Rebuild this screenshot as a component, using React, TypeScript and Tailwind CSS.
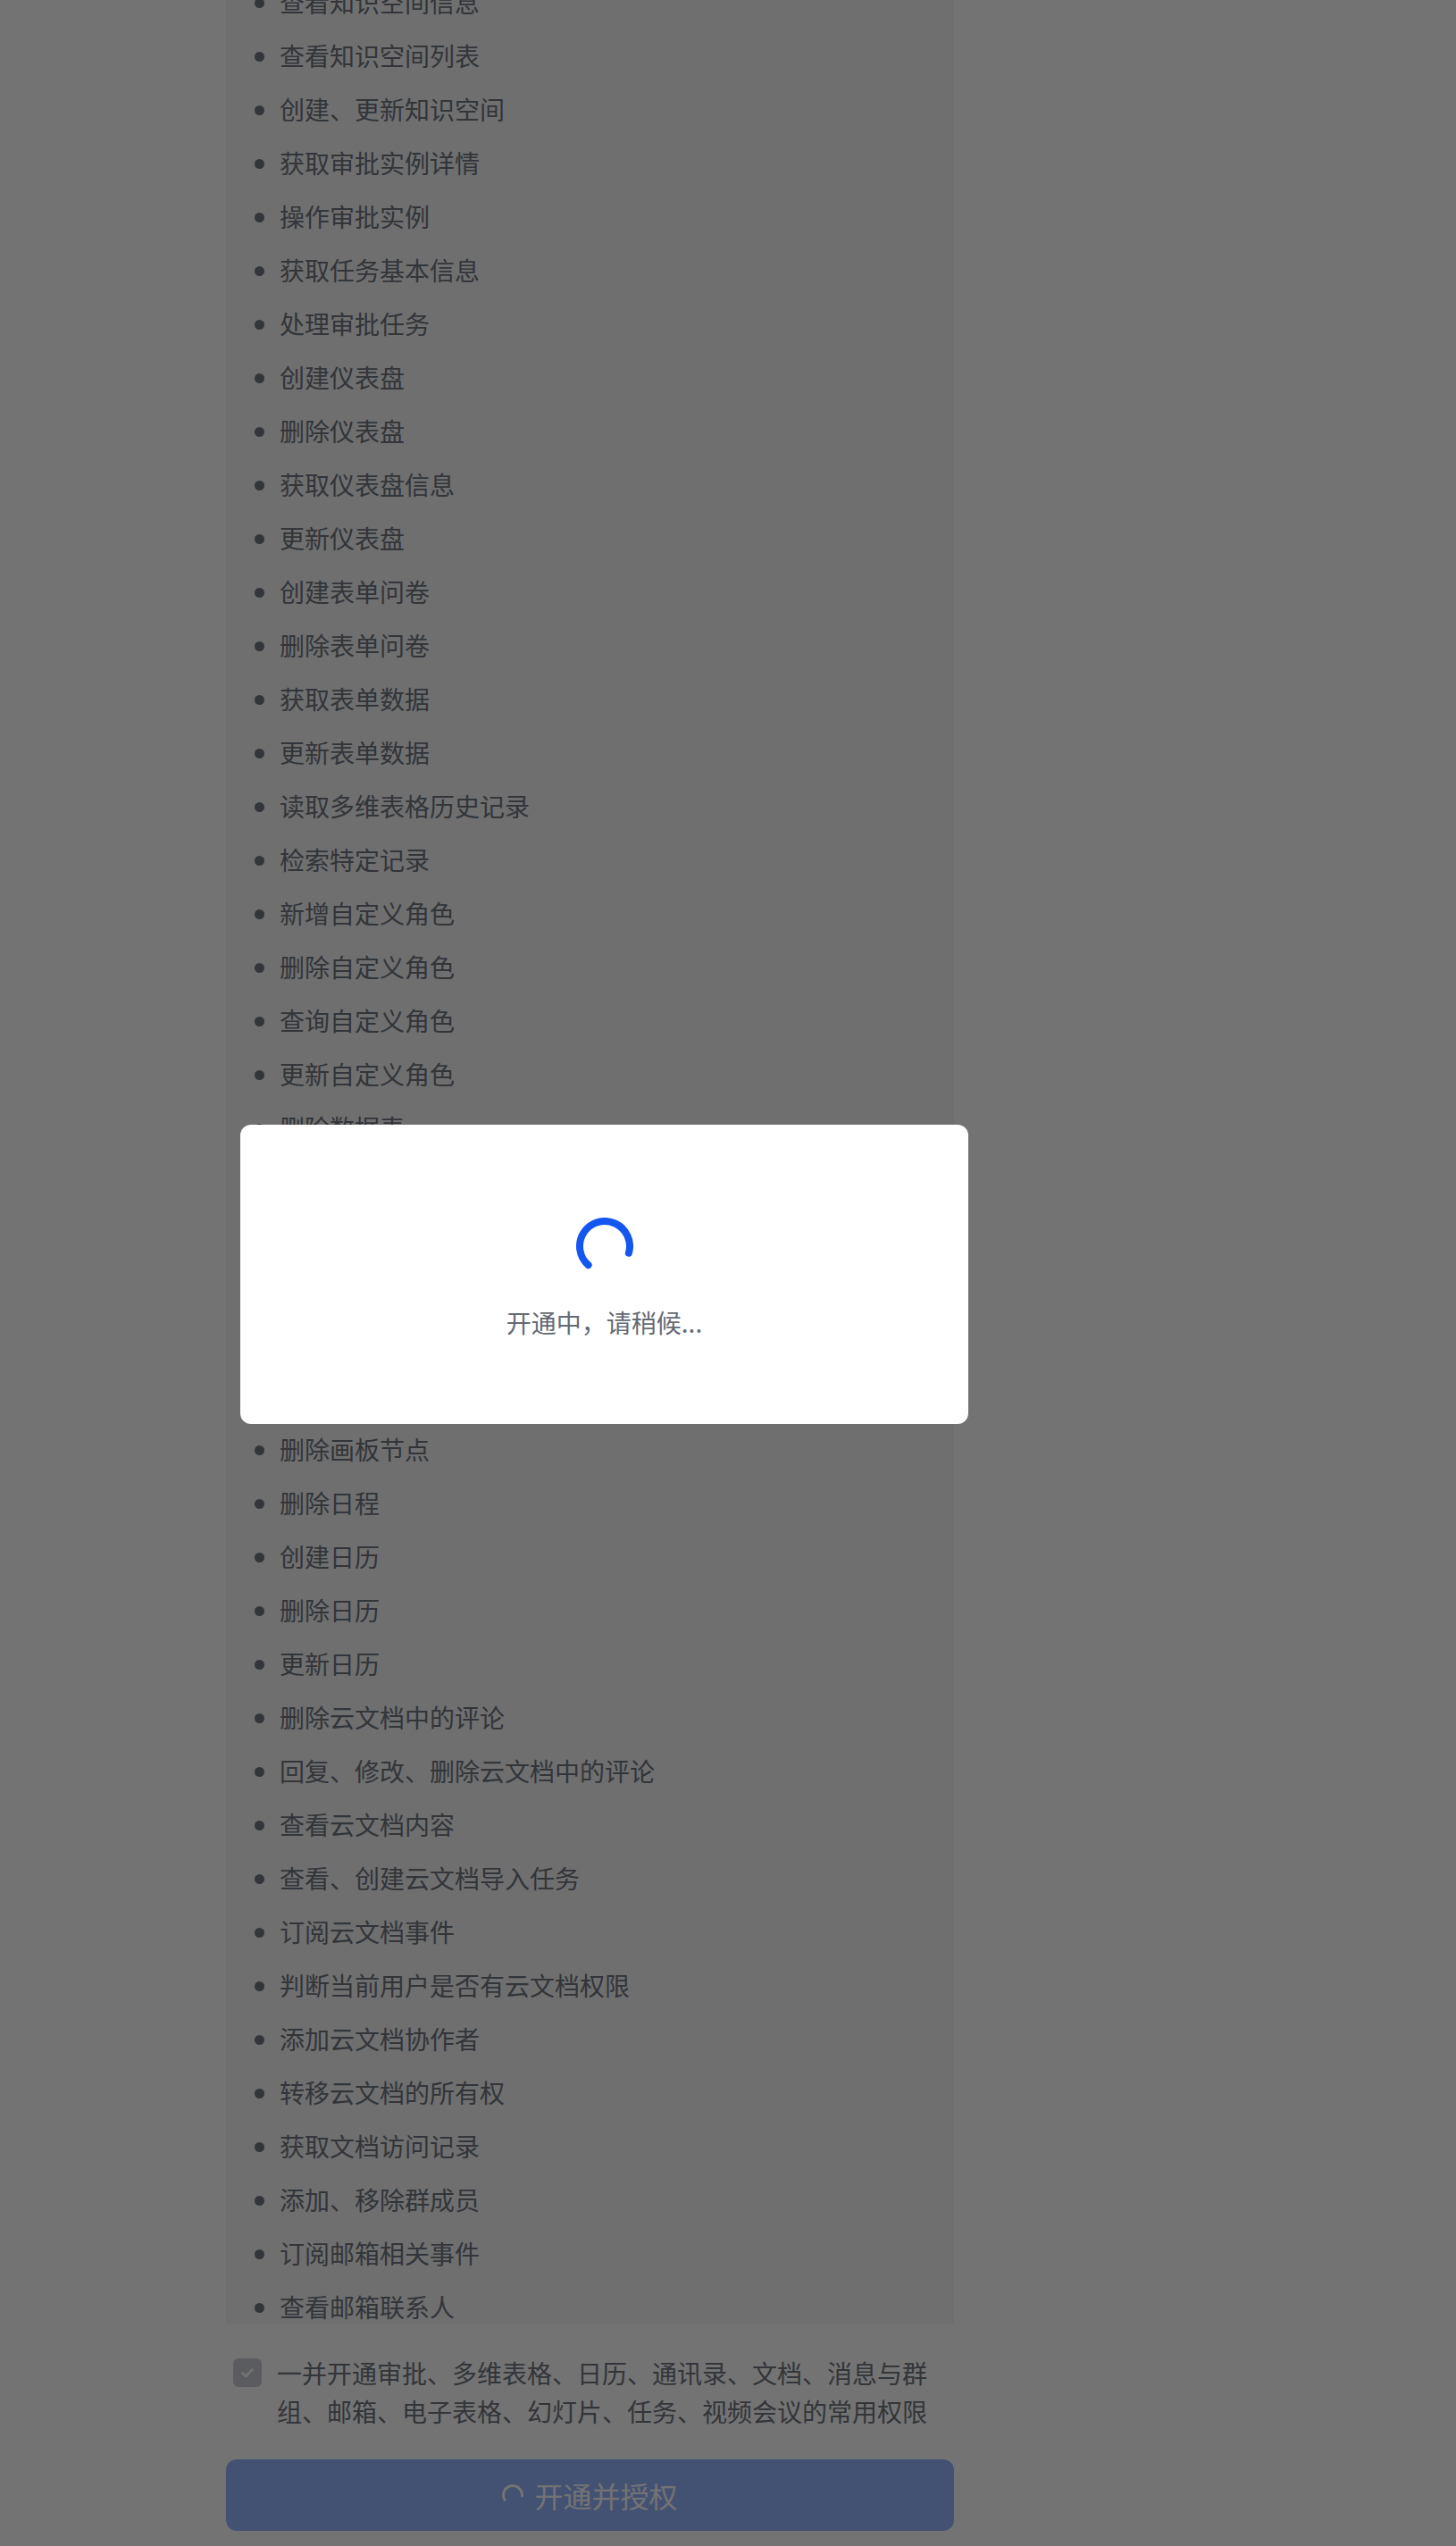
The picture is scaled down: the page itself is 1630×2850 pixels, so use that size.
const permissions = [
  "查看知识空间信息",
  "查看知识空间列表",
  "创建、更新知识空间",
  "获取审批实例详情",
  "操作审批实例",
  "获取任务基本信息",
  "处理审批任务",
  "创建仪表盘",
  "删除仪表盘",
  "获取仪表盘信息",
  "更新仪表盘",
  "创建表单问卷",
  "删除表单问卷",
  "获取表单数据",
  "更新表单数据",
  "读取多维表格历史记录",
  "检索特定记录",
  "新增自定义角色",
  "删除自定义角色",
  "查询自定义角色",
  "更新自定义角色",
  "删除数据表",
  "新增数据表",
  "更新数据表",
  "查询数据表",
  "创建画板节点",
  "查看画板节点",
  "删除画板节点",
  "删除日程",
  "创建日历",
  "删除日历",
  "更新日历",
  "删除云文档中的评论",
  "回复、修改、删除云文档中的评论",
  "查看云文档内容",
  "查看、创建云文档导入任务",
  "订阅云文档事件",
  "判断当前用户是否有云文档权限",
  "添加云文档协作者",
  "转移云文档的所有权",
  "获取文档访问记录",
  "添加、移除群成员",
  "订阅邮箱相关事件",
  "查看邮箱联系人",
];

function Spinner() {
  return (
    <svg width="64" height="64" viewBox="0 0 64 64" fill="none">
      <path
        d="M13.63 53.13 A28 28 0 1 1 58.92 39.72"
        stroke="#1456f0"
        strokeWidth="8"
        strokeLinecap="round"
      />
    </svg>
  );
}

function SmallSpinner() {
  return (
    <svg width="24" height="24" viewBox="0 0 24 24" fill="none">
      <path
        d="M2.91 17.25 A10.5 10.5 0 1 1 22.46 12.92"
        stroke="#ffffff"
        strokeWidth="3"
        strokeLinecap="round"
      />
    </svg>
  );
}

export default function App() {
  return (
    <div className="relative h-[2850px] w-full overflow-hidden bg-white font-['Noto_Sans_CJK_SC',sans-serif]">
      <div className="ml-[253px] flex w-[815px] flex-col">
        {/* permission list, scrolled */}
        <div className="h-[2602px] overflow-hidden bg-[#f5f6f7]">
          <ul className="-mt-[18px] flex flex-col gap-[20px]">
            {permissions.map((p) => (
              <li key={p} className="flex h-[40px] items-center gap-[17px] pl-[32px]">
                <span className="mt-[3px] h-[11px] w-[11px] shrink-0 rounded-full bg-[#6f757f]" />
                <span className="text-[28px] leading-[40px] text-[#6f757f]">{p}</span>
              </li>
            ))}
          </ul>
        </div>

        <div className="mt-[33px] flex items-start gap-[17px] pl-[8px]">
          <span className="mt-[5px] flex h-[32px] w-[32px] shrink-0 items-center justify-center rounded-[6px] bg-[#c9cdd2]">
            <svg width="20" height="20" viewBox="0 0 20 20" fill="none">
              <path d="M4.5 10.5 L8.3 14 L15.5 6.5" stroke="#ffffff" strokeWidth="2.6" strokeLinecap="round" strokeLinejoin="round" />
            </svg>
          </span>
          <p className="w-[740px] text-[28px] leading-[43px] text-[#6f757f]">
            一并开通审批、多维表格、日历、通讯录、文档、消息与群组、邮箱、电子表格、幻灯片、任务、视频会议的常用权限
          </p>
        </div>

        <button className="mt-[32px] flex h-[80px] w-full items-center justify-center gap-[12px] rounded-[12px] bg-[#94b5ff] text-[32px] text-white">
          <SmallSpinner />
          <span>开通并授权</span>
        </button>
      </div>

      {/* loading modal */}
      <div className="fixed inset-0 flex items-center bg-black/55">
        <div className="ml-[269px] mt-[2px] flex h-[335px] w-[815px] flex-col items-center rounded-[12px] bg-white pt-[104px]">
          <Spinner />
          <p className="mt-[33px] text-[28px] leading-[40px] text-[#646a73]">开通中，请稍候...</p>
        </div>
      </div>
    </div>
  );
}
